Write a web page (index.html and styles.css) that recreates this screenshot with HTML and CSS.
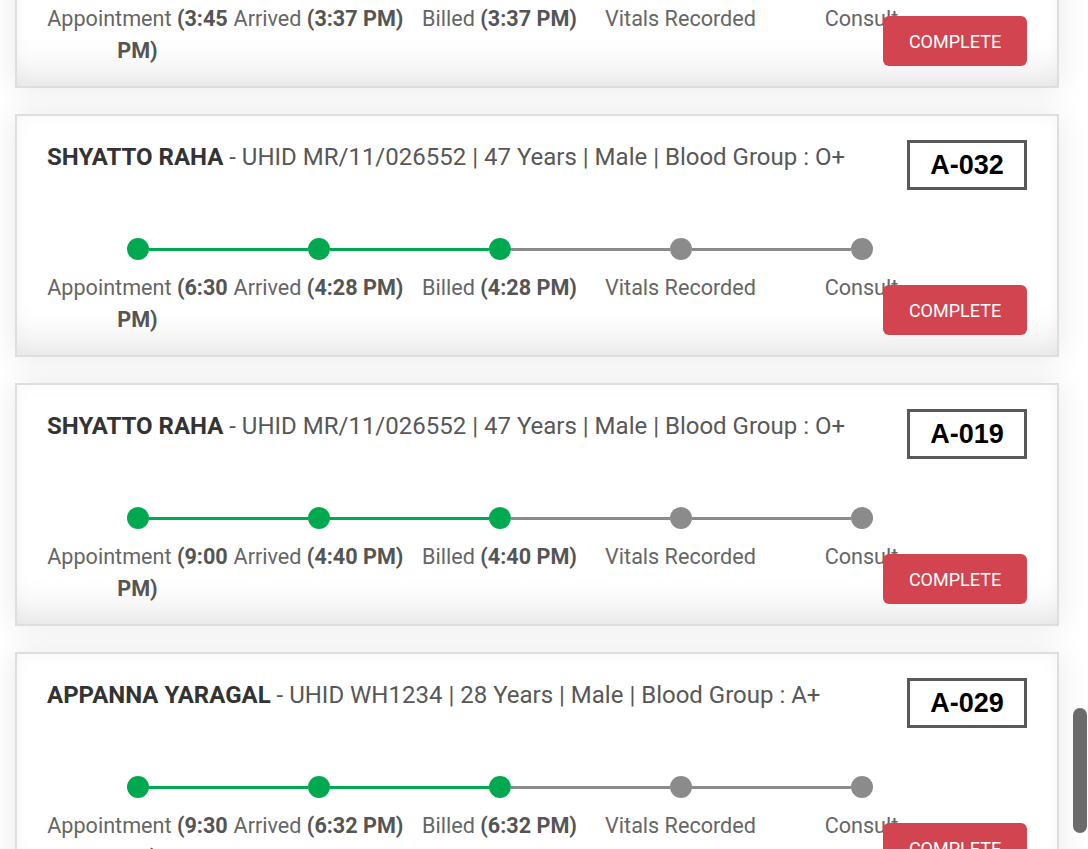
FILE: index.html
```html
<!DOCTYPE html>
<html lang="en">
<head>
<meta charset="utf-8">
<title>Patient Queue</title>
<link rel="stylesheet" href="styles.css">
</head>
<body>
<div class="app">
  <main class="queue">
    <article class="card">
      <header class="card-head">
        <p class="patient"><strong class="name">SHYATTO RAHA</strong> - UHID MR/11/026552 | 47 Years | Male | Blood Group : O+</p>
        <div class="token">A-031</div>
      </header>
      <div class="card-body">
        <ol class="steps">
          <li class="step done"><span class="track"><i class="seg seg-none"></i><b class="dot"></b><i class="seg seg-green"></i></span><span class="label">Appointment <b>(3:45 PM)</b></span></li>
          <li class="step done"><span class="track"><i class="seg seg-green"></i><b class="dot"></b><i class="seg seg-green"></i></span><span class="label">Arrived <b>(3:37 PM)</b></span></li>
          <li class="step done"><span class="track"><i class="seg seg-green"></i><b class="dot"></b><i class="seg seg-gray"></i></span><span class="label">Billed <b>(3:37 PM)</b></span></li>
          <li class="step"><span class="track"><i class="seg seg-gray"></i><b class="dot"></b><i class="seg seg-gray"></i></span><span class="label">Vitals Recorded</span></li>
          <li class="step"><span class="track"><i class="seg seg-gray"></i><b class="dot"></b><i class="seg seg-none"></i></span><span class="label">Consult</span></li>
        </ol>
        <button class="btn-complete" type="button">Complete</button>
      </div>
    </article>

    <article class="card">
      <header class="card-head">
        <p class="patient"><strong class="name">SHYATTO RAHA</strong> - UHID MR/11/026552 | 47 Years | Male | Blood Group : O+</p>
        <div class="token">A-032</div>
      </header>
      <div class="card-body">
        <ol class="steps">
          <li class="step done"><span class="track"><i class="seg seg-none"></i><b class="dot"></b><i class="seg seg-green"></i></span><span class="label">Appointment <b>(6:30 PM)</b></span></li>
          <li class="step done"><span class="track"><i class="seg seg-green"></i><b class="dot"></b><i class="seg seg-green"></i></span><span class="label">Arrived <b>(4:28 PM)</b></span></li>
          <li class="step done"><span class="track"><i class="seg seg-green"></i><b class="dot"></b><i class="seg seg-gray"></i></span><span class="label">Billed <b>(4:28 PM)</b></span></li>
          <li class="step"><span class="track"><i class="seg seg-gray"></i><b class="dot"></b><i class="seg seg-gray"></i></span><span class="label">Vitals Recorded</span></li>
          <li class="step"><span class="track"><i class="seg seg-gray"></i><b class="dot"></b><i class="seg seg-none"></i></span><span class="label">Consult</span></li>
        </ol>
        <button class="btn-complete" type="button">Complete</button>
      </div>
    </article>

    <article class="card">
      <header class="card-head">
        <p class="patient"><strong class="name">SHYATTO RAHA</strong> - UHID MR/11/026552 | 47 Years | Male | Blood Group : O+</p>
        <div class="token">A-019</div>
      </header>
      <div class="card-body">
        <ol class="steps">
          <li class="step done"><span class="track"><i class="seg seg-none"></i><b class="dot"></b><i class="seg seg-green"></i></span><span class="label">Appointment <b>(9:00 PM)</b></span></li>
          <li class="step done"><span class="track"><i class="seg seg-green"></i><b class="dot"></b><i class="seg seg-green"></i></span><span class="label">Arrived <b>(4:40 PM)</b></span></li>
          <li class="step done"><span class="track"><i class="seg seg-green"></i><b class="dot"></b><i class="seg seg-gray"></i></span><span class="label">Billed <b>(4:40 PM)</b></span></li>
          <li class="step"><span class="track"><i class="seg seg-gray"></i><b class="dot"></b><i class="seg seg-gray"></i></span><span class="label">Vitals Recorded</span></li>
          <li class="step"><span class="track"><i class="seg seg-gray"></i><b class="dot"></b><i class="seg seg-none"></i></span><span class="label">Consult</span></li>
        </ol>
        <button class="btn-complete" type="button">Complete</button>
      </div>
    </article>

    <article class="card">
      <header class="card-head">
        <p class="patient"><strong class="name">APPANNA YARAGAL</strong> - UHID WH1234 | 28 Years | Male | Blood Group : A+</p>
        <div class="token">A-029</div>
      </header>
      <div class="card-body">
        <ol class="steps">
          <li class="step done"><span class="track"><i class="seg seg-none"></i><b class="dot"></b><i class="seg seg-green"></i></span><span class="label">Appointment <b>(9:30 PM)</b></span></li>
          <li class="step done"><span class="track"><i class="seg seg-green"></i><b class="dot"></b><i class="seg seg-green"></i></span><span class="label">Arrived <b>(6:32 PM)</b></span></li>
          <li class="step done"><span class="track"><i class="seg seg-green"></i><b class="dot"></b><i class="seg seg-gray"></i></span><span class="label">Billed <b>(6:32 PM)</b></span></li>
          <li class="step"><span class="track"><i class="seg seg-gray"></i><b class="dot"></b><i class="seg seg-gray"></i></span><span class="label">Vitals Recorded</span></li>
          <li class="step"><span class="track"><i class="seg seg-gray"></i><b class="dot"></b><i class="seg seg-none"></i></span><span class="label">Consult</span></li>
        </ol>
        <button class="btn-complete" type="button">Complete</button>
      </div>
    </article>
  </main>
  <div class="scrollbar" aria-hidden="true"><div class="scroll-thumb"></div></div>
</div>
</body>
</html>
```

FILE: styles.css
```css
* { box-sizing: border-box; }

html, body {
  margin: 0;
  height: 100%;
  overflow: hidden;
  background: #ffffff;
  font-family: Roboto, "Liberation Sans", Arial, sans-serif;
}

.app {
  display: flex;
  height: 100vh;
  overflow: hidden;
}

/* list scrolled down: first card is partly above the viewport */
.queue {
  flex: 1;
  display: flex;
  flex-direction: column;
  gap: 26px;
  margin-top: -155px;
  padding: 0 14px 0 15px;
}

.card {
  flex: none;
  height: 243px;
  background: #fff;
  border: 2px solid #dedede;
  padding: 24px 30px 19px;
  box-shadow:
    inset 0 -40px 34px -24px rgba(0, 0, 0, 0.085),
    inset 0 0 18px rgba(0, 0, 0, 0.03),
    0 0 30px rgba(0, 0, 0, 0.09);
}

.card-head {
  display: flex;
  justify-content: space-between;
  align-items: flex-start;
  height: 50px;
}

.patient {
  margin: 0;
  padding-top: 1px;
  font-size: 24px;
  line-height: 33px;
  color: #585858;
}

.name {
  color: #333;
  font-weight: 700;
}

.token {
  width: 120px;
  height: 50px;
  border: 3px solid #595959;
  display: flex;
  align-items: center;
  justify-content: center;
  font-family: "Liberation Sans", Arial, sans-serif;
  font-weight: 700;
  font-size: 27px;
  color: #000;
}

.card-body {
  display: grid;
  margin-top: 48px;
}

.steps {
  grid-area: 1 / 1;
  justify-self: start;
  display: flex;
  margin: 0;
  padding: 0;
  list-style: none;
}

.step {
  flex: none;
  width: 181px;
  text-align: center;
}

.track {
  display: flex;
  align-items: center;
  height: 22px;
}

.seg {
  flex: 1;
  height: 3px;
}

.seg-green { background: #00a94f; }
.seg-gray { background: #8b8b8b; }
.seg-none { background: transparent; }

.dot {
  flex: none;
  width: 22px;
  height: 22px;
  border-radius: 50%;
  background: #8b8b8b;
}

.step.done .dot { background: #00a94f; }

.label {
  display: block;
  margin-top: 12px;
  font-size: 21.6px;
  line-height: 31.5px;
  color: #666;
}

.label b {
  color: #555;
  font-weight: 700;
}

.btn-complete {
  grid-area: 1 / 1;
  justify-self: end;
  align-self: end;
  width: 144px;
  height: 50px;
  padding: 0;
  border: 0;
  border-radius: 6px;
  background: #d2444f;
  color: #fff;
  font-family: Roboto, "Liberation Sans", Arial, sans-serif;
  font-size: 18px;
  text-transform: uppercase;
  cursor: pointer;
}

.scrollbar {
  flex: none;
  width: 15px;
  display: flex;
  flex-direction: column;
  align-items: flex-end;
}

.scroll-thumb {
  width: 14px;
  height: 125px;
  margin-top: 708px;
  margin-right: 1px;
  border-radius: 7px;
  background: #6b6b6b;
}
```
